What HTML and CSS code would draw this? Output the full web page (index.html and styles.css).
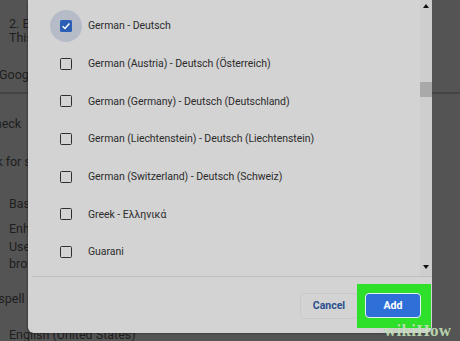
FILE: index.html
```html
<!DOCTYPE html>
<html>
<head>
<meta charset="utf-8">
<link rel="stylesheet" href="styles.css">
</head>
<body>
<div class="page">
  <div class="bg">
    <div class="bg-line l1">2. Enhanced spell check</div>
    <div class="bg-line l2">This uses the same spell checker</div>
    <div class="bg-line l3 clip1">Google Search uses</div>
    <div class="bg-divider"></div>
    <div class="bg-line l4 clip2">Spell check</div>
    <div class="bg-line l5 clip3">Check for spelling errors</div>
    <div class="bg-line l6">Basic spell check</div>
    <div class="bg-line l7">Enhanced spell check</div>
    <div class="bg-line l8">Uses the same spell checker</div>
    <div class="bg-line l9">browser sends text</div>
    <div class="bg-line l10 clip4">Use spell check for</div>
    <div class="bg-line l11">English (United States)</div>
  </div>

  <div class="dialog">
    <div class="body">
      <div class="list">
        <div class="row"><span class="cb-wrap halo"><span class="cb checked"><svg viewBox="0 0 12 12" width="12" height="12"><path d="M2.6 6.2 L5 8.5 L9.4 3.6" fill="none" stroke="#fff" stroke-width="1.5"/></svg></span></span><span class="label">German - Deutsch</span></div>
        <div class="row"><span class="cb-wrap"><span class="cb"></span></span><span class="label">German (Austria) - Deutsch (Österreich)</span></div>
        <div class="row"><span class="cb-wrap"><span class="cb"></span></span><span class="label">German (Germany) - Deutsch (Deutschland)</span></div>
        <div class="row"><span class="cb-wrap"><span class="cb"></span></span><span class="label">German (Liechtenstein) - Deutsch (Liechtenstein)</span></div>
        <div class="row"><span class="cb-wrap"><span class="cb"></span></span><span class="label">German (Switzerland) - Deutsch (Schweiz)</span></div>
        <div class="row"><span class="cb-wrap"><span class="cb"></span></span><span class="label">Greek - Ελληνικά</span></div>
        <div class="row"><span class="cb-wrap"><span class="cb"></span></span><span class="label">Guarani</span></div>
      </div>
      <div class="scrollbar">
        <span class="arrow up"></span>
        <div class="track"><div class="thumb"></div></div>
        <span class="arrow down"></span>
      </div>
    </div>
    <div class="footer">
      <button class="btn cancel">Cancel</button>
      <div class="highlight"><button class="btn add">Add</button></div>
    </div>
  </div>

  <div class="watermark">wikiHow</div>
</div>
</body>
</html>
```
FILE: styles.css
```css
* { box-sizing: border-box; }
html, body { margin: 0; padding: 0; }
body {
  width: 460px;
  height: 341px;
  overflow: hidden;
  background: #545454;
  font-family: Roboto, "Liberation Sans", sans-serif;
}
.page {
  position: relative;
  width: 460px;
  height: 341px;
  overflow: hidden;
}
.bg {
  display: flex;
  flex-direction: column;
  color: #1e1e1e;
  font-size: 12.5px;
  line-height: 15px;
}
.bg-line { padding-left: 9px; white-space: nowrap; }
.l1 { margin-top: 16px; }
.l2 { margin-top: -1px; }
.l3 { margin-top: 22px; }
.clip1 { margin-left: -10px; }
.bg-divider { height: 2px; background: #444; margin-top: 10px; }
.l4 { margin-top: 22px; }
.clip2 { margin-left: -51px; }
.l5 { margin-top: 23px; }
.clip3 { margin-left: -41px; }
.l6 { margin-top: 27px; }
.l7 { margin-top: 10px; }
.l8 { margin-top: 3px; }
.l9 { margin-top: 2px; }
.l10 { margin-top: 20px; }
.clip4 { margin-left: -35px; }
.l11 { margin-top: 21px; }

.dialog {
  position: absolute;
  left: 28px;
  top: 0;
  width: 404px;
  height: 333px;
  background: #d3d3d3;
  border-radius: 0 0 6px 6px;
  box-shadow: -1px 1px 2px rgba(0,0,0,0.25);
  display: flex;
  flex-direction: column;
  color: #2c2c2c;
}
.body {
  height: 277px;
  display: flex;
  border-bottom: 1px solid #bdbdbd;
  margin-left: 4px;
}
.list {
  flex: 1;
  padding-top: 7px;
  margin-left: -4px;
}
.row {
  height: 37.7px;
  display: flex;
  align-items: center;
}
.cb-wrap {
  width: 32px;
  height: 32px;
  margin-left: 22px;
  border-radius: 50%;
  display: flex;
  align-items: center;
  justify-content: center;
}
.cb-wrap.halo { background: #b6bcc7; }
.cb {
  width: 12px;
  height: 12px;
  border: 1.8px solid #2e2e2e;
  border-radius: 1.5px;
  display: flex;
}
.cb.checked {
  border: none;
  background: #2c5eb6;
}
.cb svg { display: block; }
.label {
  margin-left: 6px;
  font-size: 10.5px;
  letter-spacing: -0.05px;
  white-space: nowrap;
}
.scrollbar {
  width: 12px;
  background: #cecece;
  display: flex;
  flex-direction: column;
  align-items: center;
  padding-top: 4px;
  padding-bottom: 7px;
}
.arrow {
  width: 0; height: 0;
  border-left: 3.5px solid transparent;
  border-right: 3.5px solid transparent;
}
.arrow.up { border-bottom: 4px solid #111; }
.arrow.down { border-top: 4px solid #111; }
.track { flex: 1; width: 100%; padding-top: 74px; }
.thumb { height: 15px; width: 100%; background: #a9a9a9; }

.footer {
  flex: 1;
  display: flex;
  align-items: center;
  justify-content: flex-end;
  padding-right: 1px;
  padding-top: 1px;
}
.btn {
  font-family: Roboto, "Liberation Sans", sans-serif;
  font-size: 10.5px;
  font-weight: bold;
  border-radius: 4px;
  cursor: pointer;
}
.cancel {
  height: 26px;
  width: 58px;
  background: transparent;
  border: 1px solid #c9c9c9;
  color: #2b4f8e;
  margin-right: -1px;
  padding: 0;
}
.highlight {
  width: 74px;
  height: 44px;
  background: #2ee02a;
  display: flex;
  align-items: center;
  justify-content: center;
  padding-right: 2px;
}
.add {
  width: 56px;
  height: 25px;
  background: #2f6fd8;
  border: 1px solid #e6eef9;
  color: #fff;
  padding: 0;
}
.watermark {
  position: absolute;
  left: 384px;
  top: 321px;
  font-family: "Liberation Serif", serif;
  font-weight: bold;
  font-size: 17px;
  color: rgba(220, 240, 210, 0.75);
  text-shadow: 0 0 1px rgba(80,140,60,0.5);
  letter-spacing: 0.3px;
}
```
